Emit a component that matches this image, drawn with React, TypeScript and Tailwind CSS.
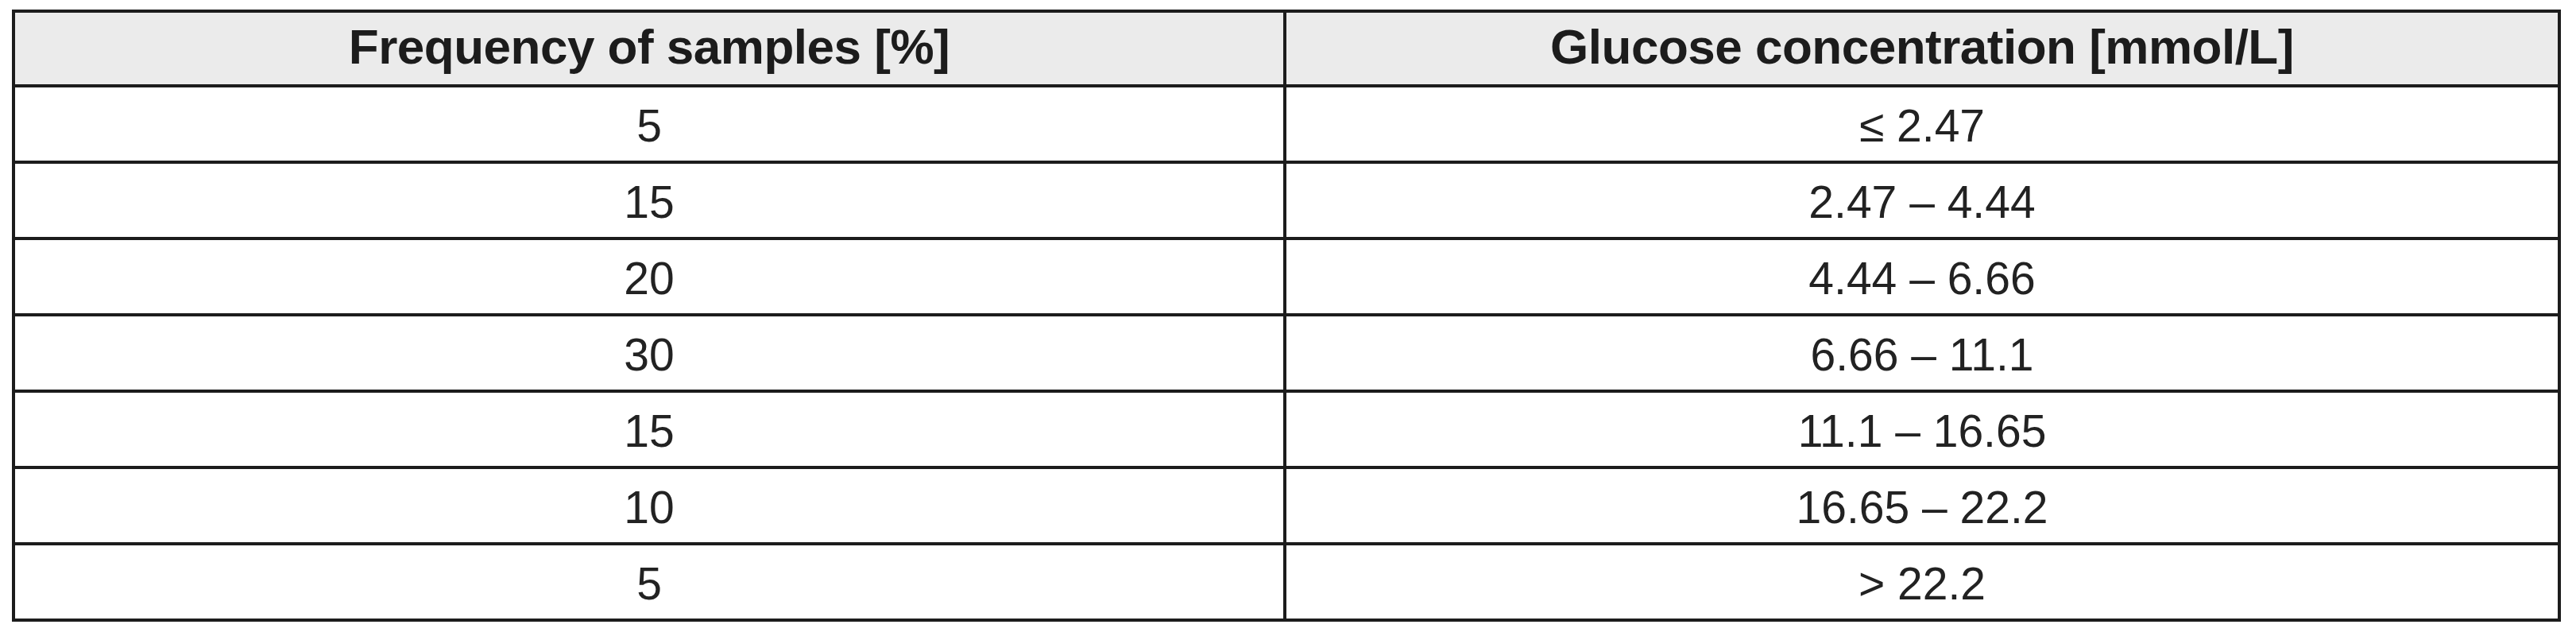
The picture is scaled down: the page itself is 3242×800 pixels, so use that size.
const rows: [string, string][] = [
  ['5', '≤ 2.47'],
  ['15', '2.47 – 4.44'],
  ['20', '4.44 – 6.66'],
  ['30', '6.66 – 11.1'],
  ['15', '11.1 – 16.65'],
  ['10', '16.65 – 22.2'],
  ['5', '> 22.2'],
];

export default function App() {
  return (
    <div className="w-[3242px] h-[800px] bg-white pt-[12px] pl-[15px] font-['Liberation_Sans',Arial,sans-serif] text-[#1c1c1c]">
      <div className="w-[3208px] border-4 border-[#1c1c1c]">
        {/* header */}
        <div className="grid grid-cols-[1596px_1604px] bg-[#ebebeb]">
          <div className="h-[90px] flex items-center justify-center pb-[6px] text-[62px] font-bold tracking-[-0.5px]">
            Frequency of samples [%]
          </div>
          <div className="h-[90px] flex items-center justify-center pb-[6px] border-l-4 border-[#1c1c1c] text-[62px] font-bold tracking-[-0.5px]">
            Glucose concentration [mmol/L]
          </div>
        </div>

        {rows.map(([freq, range], i) => (
          <div key={i} className="grid grid-cols-[1596px_1604px] border-t-4 border-[#1c1c1c] bg-white">
            <div className="h-[92px] flex items-center justify-center pt-[5px] text-[57px] text-[#222]">
              {freq}
            </div>
            <div className="h-[92px] flex items-center justify-center pt-[5px] border-l-4 border-[#1c1c1c] text-[57px] text-[#222]">
              {range}
            </div>
          </div>
        ))}
      </div>
    </div>
  );
}
